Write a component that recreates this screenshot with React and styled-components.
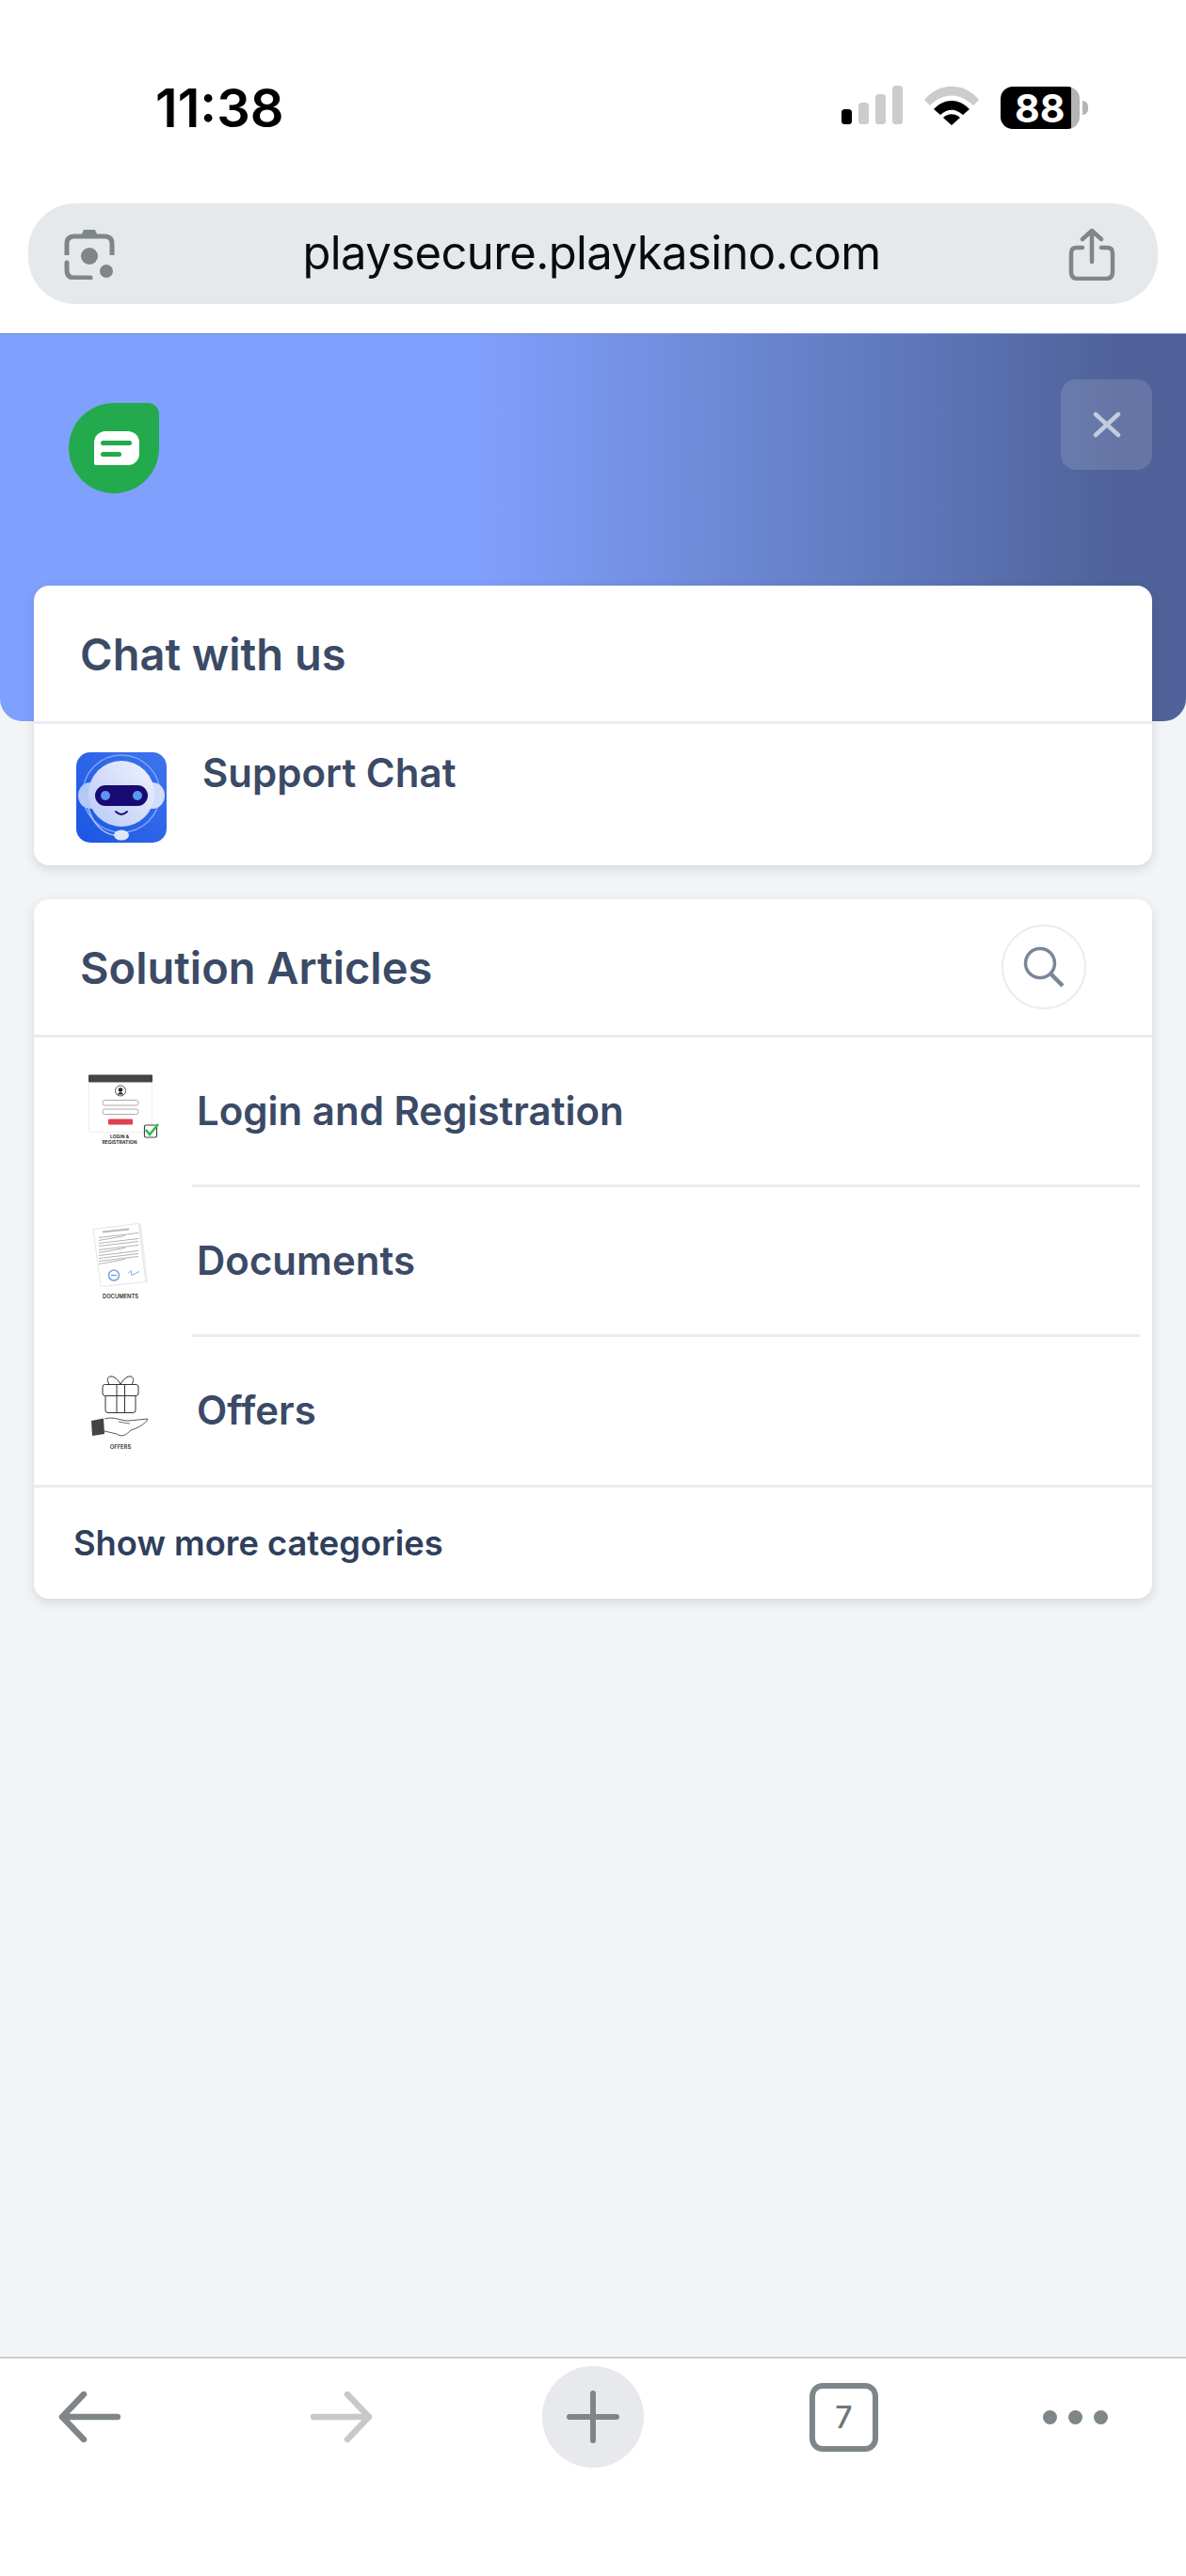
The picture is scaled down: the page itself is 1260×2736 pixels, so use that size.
import React from "react";
import styled, { createGlobalStyle } from "styled-components";

const Global = createGlobalStyle`
  html, body { margin: 0; padding: 0; background: #fff; }
  * { box-sizing: border-box; }
`;

const Page = styled.div`
  width: 1260px;
  height: 2736px;
  display: flex;
  flex-direction: column;
  font-family: Inter, "Liberation Sans", sans-serif;
  overflow: hidden;
  background: #fff;
`;

const StatusBar = styled.div`
  height: 216px;
  flex: none;
  display: flex;
  justify-content: space-between;
  padding: 85px 104px 0 165px;
`;

const Clock = styled.div`
  font-size: 56px;
  font-weight: 600;
  line-height: 60px;
  color: #000;
`;

const StatusIcons = styled.div`
  display: flex;
  align-items: flex-start;
  margin-top: 6px;
  gap: 23px;
`;

const BatteryWrap = styled.div`
  display: flex;
  align-items: center;
  height: 45px;
  margin-top: 1px;
`;

const BatteryBody = styled.div`
  width: 84px;
  height: 45px;
  border-radius: 13px;
  display: flex;
  align-items: center;
  padding-left: 15px;
  background: linear-gradient(90deg, #000 89%, #b4b4b4 89%);
  color: #fff;
  font-size: 41px;
  font-weight: 700;
`;

const BatteryNub = styled.div`
  width: 6px;
  height: 15px;
  margin-left: 3px;
  background: #b4b4b4;
  border-radius: 0 8px 8px 0;
`;

const AddressRow = styled.div`
  height: 138px;
  flex: none;
  padding: 0 30px;
`;

const AddressBar = styled.div`
  height: 107px;
  border-radius: 50px;
  background: #e6e9ec;
  display: flex;
  align-items: center;
  justify-content: space-between;
  padding: 0 45px 0 38px;
`;

const Url = styled.div`
  font-size: 49px;
  font-weight: 400;
  color: #0b0b0b;
  letter-spacing: -0.6px;
  margin-top: -2px;
`;

const Main = styled.main`
  flex: 1;
  background: #f3f4f6;
  min-height: 0;
`;

const Hero = styled.div`
  height: 412px;
  border-top: 1px solid #6a83cc;
  border-radius: 0 0 24px 24px;
  background: linear-gradient(90deg, #80a0fd 0%, #80a0fd 40%, #6a85d0 64%, #5c73b4 80%, #4f6299 94%, #4f6299 100%);
  display: flex;
  justify-content: space-between;
  align-items: flex-start;
  padding: 48px 36px 0 73px;
`;

const Logo = styled.svg`
  width: 96px;
  height: 96px;
  margin-top: 25px;
`;

const CloseButton = styled.button`
  width: 97px;
  height: 96px;
  border: none;
  padding: 0;
  border-radius: 16px;
  background: rgba(255, 255, 255, 0.13);
  display: flex;
  align-items: center;
  justify-content: center;
`;

const Cards = styled.div`
  margin-top: -144px;
  padding: 0 36px;
  display: flex;
  flex-direction: column;
  gap: 36px;
`;

const Card = styled.section`
  background: #fff;
  border-radius: 16px;
  box-shadow: 0 4px 12px rgba(30, 40, 60, 0.14);
  overflow: hidden;
`;

const CardHead = styled.div`
  height: 147px;
  display: flex;
  align-items: center;
  justify-content: space-between;
  padding: 0 70px 0 49px;
  border-bottom: 3px solid #ebebf0;
`;

const CardTitle = styled.h2`
  margin: 0;
  font-size: 47px;
  font-weight: 600;
  color: #3b4a66;
`;

const ChatRow = styled.div`
  height: 150px;
  display: flex;
  align-items: flex-start;
  padding: 30px 0 0 45px;
  gap: 38px;
`;

const ChatLabel = styled.div`
  font-size: 42px;
  font-weight: 600;
  color: #3b4a66;
  margin-top: -4px;
  line-height: 52px;
`;

const SearchButton = styled.div`
  width: 90px;
  height: 90px;
  border: 2px solid #ebebf0;
  border-radius: 50%;
  display: flex;
  align-items: center;
  justify-content: center;
`;

const ArticleRow = styled.div`
  height: 159px;
  display: flex;
  align-items: center;
  padding-left: 50px;
`;

const Thumb = styled.svg`
  width: 90px;
  height: 90px;
  flex: none;
  margin-top: -2px;
`;

const ArticleBody = styled.div`
  height: 100%;
  flex: 1;
  margin-left: 28px;
  margin-right: 13px;
  display: flex;
  align-items: center;
  padding: 0 0 2px 5px;
  border-bottom: 3px solid ${(p) => (p.$last ? "transparent" : "#ebebf0")};
  font-size: 42px;
  font-weight: 600;
  color: #3b4a66;
`;

const ShowMore = styled.div`
  height: 121px;
  margin-top: -2px;
  border-top: 3px solid #ebebf0;
  display: flex;
  align-items: center;
  padding-left: 42px;
  font-size: 36.3px;
  font-weight: 600;
  color: #2f3f5c;
`;

const BottomBar = styled.div`
  flex: none;
  height: 233px;
  border-top: 2px solid #cfcfcf;
  background: #fff;
  display: grid;
  grid-template-columns: 267px 267px 326px 248px 152px;
  padding: 8px 0 0 0;
`;

const BarSlot = styled.div`
  height: 108px;
  display: flex;
  align-items: center;
  justify-content: flex-start;
  padding-left: ${(p) => p.$pad || 0}px;
`;

const PlusCircle = styled.div`
  width: 108px;
  height: 108px;
  border-radius: 50%;
  background: #e8e9ed;
  display: flex;
  align-items: center;
  justify-content: center;
`;

const TabBox = styled.div`
  width: 73px;
  height: 73px;
  border: 6px solid #7f8689;
  border-radius: 14px;
  display: flex;
  align-items: center;
  justify-content: center;
  font-size: 32px;
  font-weight: 500;
  color: #6f7679;
`;

const Dots = styled.div`
  display: flex;
  gap: 12px;
  & span {
    width: 15px;
    height: 15px;
    border-radius: 50%;
    background: #7f8689;
  }
`;

function Signal() {
  return (
    <svg width="65" height="42" viewBox="0 0 65 42">
      <rect x="0" y="25" width="11" height="16" rx="3.5" fill="#000" />
      <rect x="18" y="18" width="11" height="23" rx="3.5" fill="#ccc" />
      <rect x="36" y="9" width="11" height="32" rx="3.5" fill="#ccc" />
      <rect x="54" y="0" width="11" height="41" rx="3.5" fill="#ccc" />
    </svg>
  );
}

function Wifi() {
  return (
    <svg width="58" height="42" viewBox="0 0 58 42">
      <path d="M0 15 C16 -4 42 -4 58 15 L52 21 C38 7 20 7 6 21 Z" fill="#ccc" />
      <path d="M10 25 C21 13 37 13 48 25 L41 31 C33 24 25 24 17 31 Z" fill="#000" />
      <path d="M20 34 C25 29 33 29 38 34 L29 42 Z" fill="#000" />
    </svg>
  );
}

function LensIcon() {
  return (
    <svg width="54" height="54" viewBox="0 0 54 54" fill="none">
      <path d="M18 8 L21 1 H33 L36 8 Z" fill="#7f8689" />
      <path d="M3 28 V16 Q3 8 11 8 H43 Q51 8 51 16 V28" stroke="#7f8689" strokeWidth="5" />
      <path d="M3 36 V44 Q3 52 11 52 H28" stroke="#7f8689" strokeWidth="5" strokeLinecap="round" />
      <circle cx="27" cy="29" r="9" fill="#7f8689" />
      <circle cx="45" cy="45" r="7" fill="#7f8689" />
    </svg>
  );
}

function ShareIcon() {
  return (
    <svg width="50" height="56" viewBox="0 0 50 56" fill="none" stroke="#7f8689" strokeWidth="4.5" strokeLinecap="round" strokeLinejoin="round">
      <path d="M15 21 H9 Q3 21 3 27 V47 Q3 54 10 54 H40 Q47 54 47 47 V27 Q47 21 41 21 H35" />
      <path d="M25 36 V3 M15 12 L25 3 L35 12" />
    </svg>
  );
}

function ArrowIcon({ flip, color }) {
  return (
    <svg width="66" height="54" viewBox="0 0 66 54" fill="none" stroke={color} strokeWidth="6.5" strokeLinecap="round" strokeLinejoin="round" style={flip ? { transform: "scaleX(-1)" } : undefined}>
      <path d="M63 27 H4 M27 3 L4 27 L27 51" />
    </svg>
  );
}

function RobotIcon() {
  return (
    <svg width="96" height="96" viewBox="0 0 96 96">
      <defs>
        <linearGradient id="rb" x1="1" y1="0" x2="0" y2="1">
          <stop offset="0" stopColor="#3d74ee" />
          <stop offset="1" stopColor="#1b56e2" />
        </linearGradient>
        <linearGradient id="rh" x1="1" y1="0" x2="0" y2="1">
          <stop offset="0" stopColor="#f0f2fd" />
          <stop offset="1" stopColor="#b9c9f6" />
        </linearGradient>
      </defs>
      <rect width="96" height="96" rx="15" fill="url(#rb)" />
      <circle cx="48" cy="44" r="41" fill="none" stroke="#7fa3f5" strokeWidth="1.5" />
      <path d="M13 60 C18 76 28 86 40 88" fill="none" stroke="#a9c2f8" strokeWidth="1.5" />
      <ellipse cx="15" cy="46" rx="13" ry="14" fill="#b4c8f7" />
      <ellipse cx="81" cy="46" rx="13" ry="14" fill="#d3dcfa" />
      <circle cx="48" cy="44" r="35" fill="url(#rh)" />
      <rect x="20" y="35" width="56" height="22" rx="11" fill="#190a72" />
      <circle cx="31" cy="46" r="5" fill="#5b96f0" />
      <circle cx="65" cy="46" r="5" fill="#5b96f0" />
      <path d="M42 63 Q48 69 54 63" fill="none" stroke="#190a72" strokeWidth="1.8" strokeLinecap="round" />
      <ellipse cx="48" cy="88" rx="8" ry="5.5" fill="#dfe6fb" />
    </svg>
  );
}

function LoginThumb() {
  return (
    <Thumb viewBox="0 0 90 90">
      <rect x="8.5" y="6" width="67" height="60.5" rx="2" fill="#fff" stroke="#eee" />
      <rect x="8" y="5.5" width="68" height="8" rx="1" fill="#444" />
      <circle cx="42" cy="22.5" r="5.5" fill="#fff" stroke="#555" />
      <circle cx="42" cy="21.5" r="2.3" fill="#222" />
      <path d="M38.5 26.5 Q42 21.5 45.5 26.5 Z" fill="#222" />
      <rect x="23" y="32.5" width="38" height="5.5" rx="2.5" fill="#fff" stroke="#aaa" />
      <rect x="23" y="42" width="38" height="5.5" rx="2.5" fill="#fff" stroke="#aaa" />
      <rect x="29" y="52.5" width="26" height="6" rx="1" fill="#e04050" />
      <rect x="67.5" y="59" width="13" height="13" rx="1.5" fill="#fff" stroke="#444" strokeWidth="1.2" />
      <path d="M69 64 L73 69 L82 58" fill="none" stroke="#2db84a" strokeWidth="2.5" />
      <text x="41" y="73" fontSize="5" fontWeight="700" textAnchor="middle" fill="#333">LOGIN &amp;</text>
      <text x="41" y="79" fontSize="5" fontWeight="700" textAnchor="middle" fill="#333">REGISTRATION</text>
    </Thumb>
  );
}

function DocumentThumb() {
  const lines = [20, 23, 26, 29, 33, 36, 39, 42, 45, 48];
  return (
    <Thumb viewBox="0 0 90 90">
      <g transform="translate(3 -1.5)">
        <path d="M13 12 L61 6 L68 68 L22 73 Z" fill="#eee" />
        <path d="M10 12 L58 6 L66 68 L18 73 Z" fill="#fff" stroke="#e6e6e6" />
        <path d="M20 15 L48 12" stroke="#bbb" strokeWidth="2" />
        {lines.map((y, i) => (
          <path key={y} d={`M16 ${y + 1} L${i % 4 === 1 ? 44 : 58} ${y - 4}`} stroke="#aaa" strokeWidth="0.9" />
        ))}
        <circle cx="32" cy="61" r="5.5" fill="#fff" stroke="#7da7e0" strokeWidth="1.6" />
        <path d="M29 61 H35" stroke="#7da7e0" strokeWidth="1.6" />
        <path d="M47 59 L50 56 L51 61 L59 57" fill="none" stroke="#7da7e0" strokeWidth="1" />
      </g>
      <text x="42" y="83.5" fontSize="5.8" fontWeight="600" textAnchor="middle" fill="#333">DOCUMENTS</text>
    </Thumb>
  );
}

function OfferThumb() {
  return (
    <Thumb viewBox="0 0 90 90" fill="none">
      <rect x="23" y="16.5" width="38" height="12" rx="2.5" stroke="#333" strokeWidth="1" />
      <path d="M26 28.5 V44 Q26 46.5 29 46.5 H55 Q58 46.5 58 44 V28.5" stroke="#333" strokeWidth="1" />
      <path d="M38 16.5 V46.5 M46.5 16.5 V46.5" stroke="#333" strokeWidth="1" />
      <path d="M42 16.5 C36 4 24 6 30 16.5 M42 16.5 C48 4 60 6 54 16.5" stroke="#333" strokeWidth="1" />
      <path d="M11 55 L24 52.5 L25 69 L12 71 Z" fill="#444" />
      <path d="M25 53 C35 50 42 55 50 55 L71 53 C69 58 60 63 53 65 C48 70 44 73 38 69 L25 66" stroke="#444" strokeWidth="0.9" />
      <path d="M40 56 C46 57 50 58 52 58" stroke="#444" strokeWidth="0.8" />
      <text x="42" y="84.5" fontSize="5.8" fontWeight="600" textAnchor="middle" fill="#333">OFFERS</text>
    </Thumb>
  );
}

const articles = [
  { label: "Login and Registration", thumb: <LoginThumb /> },
  { label: "Documents", thumb: <DocumentThumb /> },
  { label: "Offers", thumb: <OfferThumb /> },
];

export default function App() {
  return (
    <Page>
      <Global />
      <StatusBar>
        <Clock>11:38</Clock>
        <StatusIcons>
          <Signal />
          <Wifi />
          <BatteryWrap>
            <BatteryBody>88</BatteryBody>
            <BatteryNub />
          </BatteryWrap>
        </StatusIcons>
      </StatusBar>
      <AddressRow>
        <AddressBar>
          <LensIcon />
          <Url>playsecure.playkasino.com</Url>
          <ShareIcon />
        </AddressBar>
      </AddressRow>
      <Main>
        <Hero>
          <Logo viewBox="0 0 96 96">
            <path d="M48 0H84a12 12 0 0 1 12 12V48a48 48 0 0 1-96 0 48 48 0 0 1 48-48z" fill="#22aa4c" />
            <path d="M27 42a12 12 0 0 1 12-12H63a12 12 0 0 1 12 12V54a12 12 0 0 1-12 12H29a2 2 0 0 1-2-2z" fill="#fff" />
            <rect x="34" y="40" width="33" height="5" rx="2.5" fill="#22aa4c" />
            <rect x="34" y="52" width="22" height="5" rx="2.5" fill="#22aa4c" />
          </Logo>
          <CloseButton aria-label="Close">
            <svg width="30" height="30" viewBox="0 0 30 30" fill="none" stroke="#c3cbde" strokeWidth="4.5" strokeLinecap="round">
              <path d="M3 4 L27 26 M27 4 L3 26" />
            </svg>
          </CloseButton>
        </Hero>
        <Cards>
          <Card>
            <CardHead>
              <CardTitle>Chat with us</CardTitle>
            </CardHead>
            <ChatRow>
              <RobotIcon />
              <ChatLabel>Support Chat</ChatLabel>
            </ChatRow>
          </Card>
          <Card>
            <CardHead>
              <CardTitle>Solution Articles</CardTitle>
              <SearchButton>
                <svg width="44" height="44" viewBox="0 0 44 44" fill="none" stroke="#7b8699" strokeWidth="3.5">
                  <circle cx="18" cy="18" r="15.5" />
                  <path d="M29 29 L42 42" strokeWidth="4.5" />
                </svg>
              </SearchButton>
            </CardHead>
            {articles.map((a, i) => (
              <ArticleRow key={a.label}>
                {a.thumb}
                <ArticleBody $last={i === articles.length - 1}>{a.label}</ArticleBody>
              </ArticleRow>
            ))}
            <ShowMore>Show more categories</ShowMore>
          </Card>
        </Cards>
      </Main>
      <BottomBar>
        <BarSlot $pad={62}>
          <ArrowIcon color="#7f8689" />
        </BarSlot>
        <BarSlot $pad={63}>
          <ArrowIcon flip color="#c8c8c8" />
        </BarSlot>
        <BarSlot $pad={42}>
          <PlusCircle>
            <svg width="56" height="56" viewBox="0 0 56 56" fill="none" stroke="#7f8689" strokeWidth="6" strokeLinecap="round">
              <path d="M28 3 V53 M3 28 H53" />
            </svg>
          </PlusCircle>
        </BarSlot>
        <BarSlot>
          <TabBox>7</TabBox>
        </BarSlot>
        <BarSlot>
          <Dots>
            <span />
            <span />
            <span />
          </Dots>
        </BarSlot>
      </BottomBar>
    </Page>
  );
}
